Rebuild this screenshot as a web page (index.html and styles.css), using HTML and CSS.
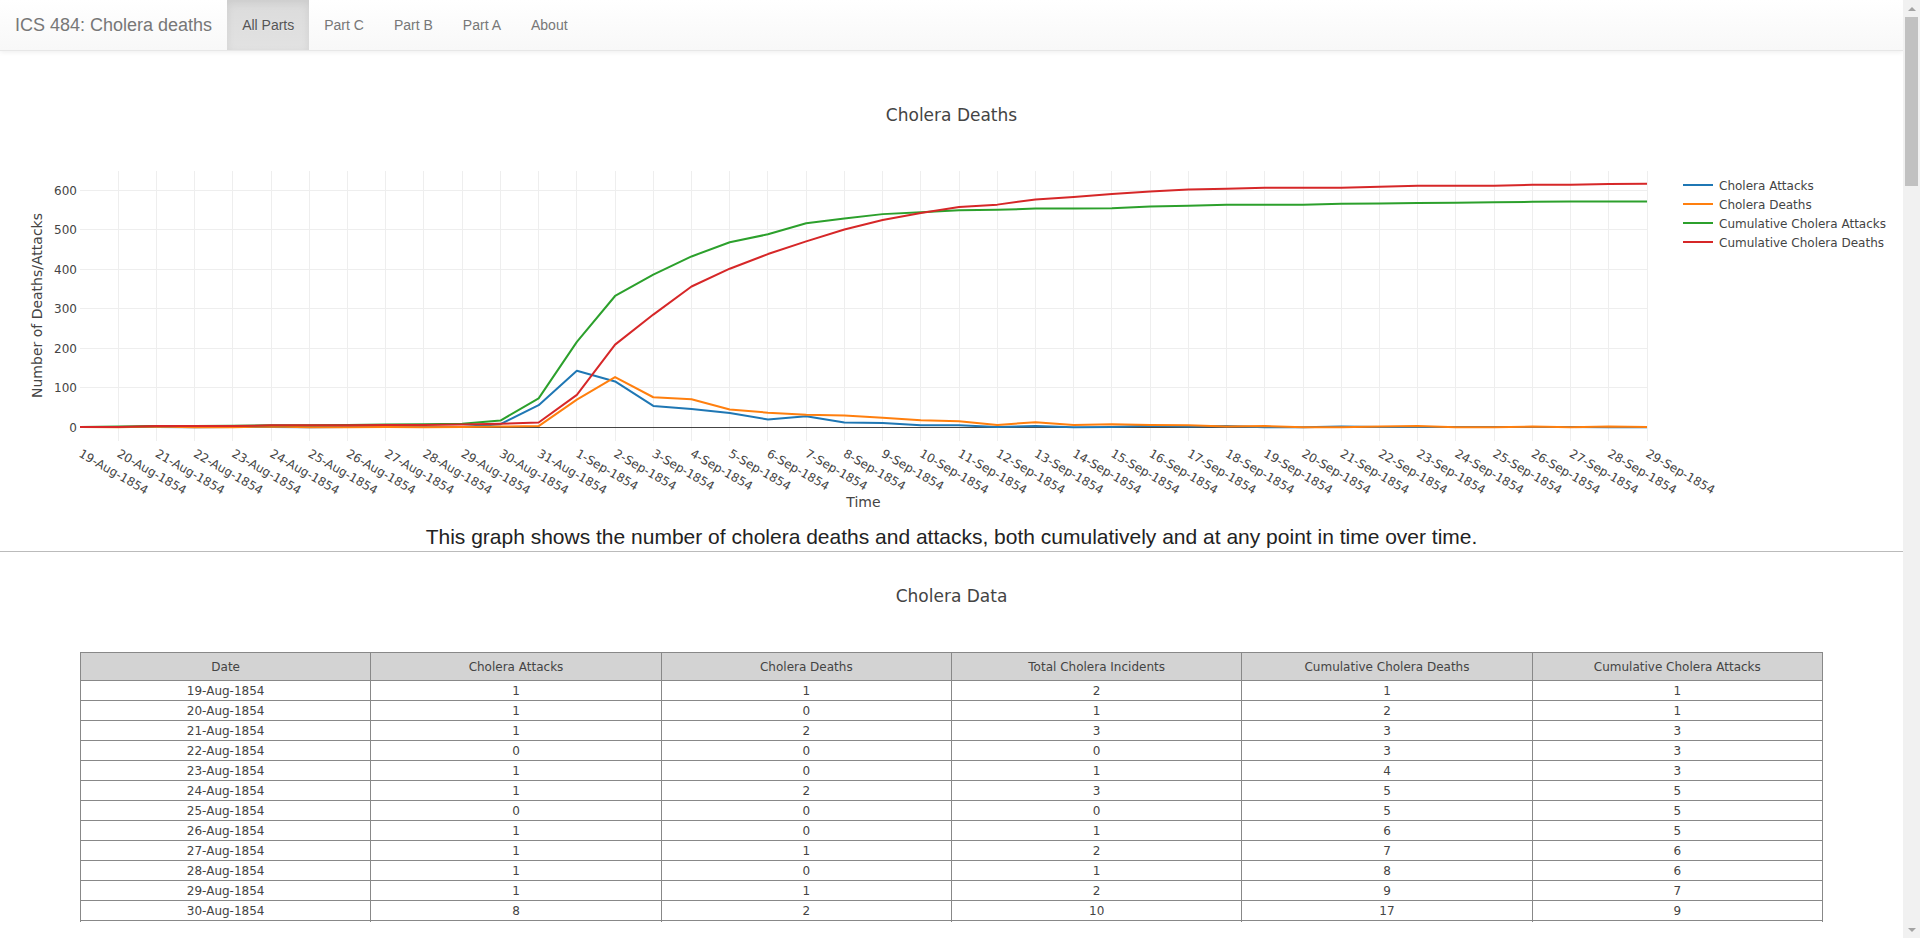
FILE: index.html
```html
<!DOCTYPE html>
<html lang="en">
<head>
<meta charset="utf-8">
<title>ICS 484: Cholera deaths</title>
<link rel="stylesheet" href="styles.css">
</head>
<body>
<div class="page">
  <nav class="navbar">
    <a class="brand" href="#">ICS 484: Cholera deaths</a>
    <ul class="nav">
      <li class="active"><a href="#">All Parts</a></li>
      <li><a href="#">Part C</a></li>
      <li><a href="#">Part B</a></li>
      <li><a href="#">Part A</a></li>
      <li><a href="#">About</a></li>
    </ul>
  </nav>

  <div class="figure">
    <svg class="chart" width="1903" height="450" viewBox="0 71 1903 450" xmlns="http://www.w3.org/2000/svg">
      <g class="grid">
        <g transform="translate(80 0) scale(38.22 1)">
          <path vector-effect="non-scaling-stroke" d="M1 171V441M2 171V441M3 171V441M4 171V441M5 171V441M6 171V441M7 171V441M8 171V441M9 171V441M10 171V441M11 171V441M12 171V441M13 171V441M14 171V441M15 171V441M16 171V441M17 171V441M18 171V441M19 171V441M20 171V441M21 171V441M22 171V441M23 171V441M24 171V441M25 171V441M26 171V441M27 171V441M28 171V441M29 171V441M30 171V441M31 171V441M32 171V441M33 171V441M34 171V441M35 171V441M36 171V441M37 171V441M38 171V441M39 171V441M40 171V441M41 171V441"/>
        </g>
        <path d="M80 387.5H1647M80 348H1647M80 308.5H1647M80 269H1647M80 229.5H1647M80 190H1647"/>
      </g>
      <path class="zero" d="M80 427.5H1647"/>

      <g class="traces" transform="translate(80 427.3) scale(38.22 -0.3955)">
        <polyline class="t-blue" vector-effect="non-scaling-stroke" points="0,1 1,1 2,1 3,0 4,1 5,1 6,0 7,1 8,1 9,1 10,1 11,8 12,56 13,143 14,116 15,54 16,46 17,36 18,20 19,28 20,12 21,11 22,5 23,5 24,1 25,3 26,0 27,1 28,4 29,2 30,3 31,0 32,0 33,2 34,1 35,1 36,1 37,1 38,1 39,1 40,0 41,0"/>
        <polyline class="t-orange" vector-effect="non-scaling-stroke" points="0,1 1,0 2,2 3,0 4,0 5,2 6,0 7,0 8,1 9,0 10,1 11,2 12,3 13,70 14,127 15,76 16,71 17,45 18,37 19,32 20,30 21,24 22,18 23,15 24,6 25,13 26,6 27,8 28,6 29,5 30,2 31,3 32,0 33,0 34,2 35,3 36,0 37,0 38,2 39,0 40,2 41,1"/>
        <polyline class="t-green" vector-effect="non-scaling-stroke" points="0,1 1,2 2,3 3,3 4,4 5,5 6,5 7,6 8,7 9,8 10,9 11,17 12,73 13,216 14,332 15,386 16,432 17,468 18,488 19,516 20,528 21,539 22,544 23,549 24,550 25,553 26,553 27,554 28,558 29,560 30,563 31,563 32,563 33,565 34,566 35,567 36,568 37,569 38,570 39,571 40,571 41,571"/>
        <polyline class="t-red" vector-effect="non-scaling-stroke" points="0,1 1,1 2,3 3,3 4,3 5,5 6,5 7,5 8,6 9,6 10,7 11,9 12,12 13,82 14,209 15,285 16,356 17,401 18,438 19,470 20,500 21,524 22,542 23,557 24,563 25,576 26,582 27,590 28,596 29,601 30,603 31,606 32,606 33,606 34,608 35,611 36,611 37,611 38,613 39,613 40,615 41,616"/>
      </g>

      <g class="ytick">
        <text x="77" y="431.5">0</text>
        <text x="77" y="392">100</text>
        <text x="77" y="352.5">200</text>
        <text x="77" y="313">300</text>
        <text x="77" y="273.5">400</text>
        <text x="77" y="234">500</text>
        <text x="77" y="194.5">600</text>
      </g>

      <g class="xtick">
        <text x="78" y="456" transform="rotate(30 78 456)">19-Aug-1854</text>
        <text x="116.2" y="456" transform="rotate(30 116.2 456)">20-Aug-1854</text>
        <text x="154.4" y="456" transform="rotate(30 154.4 456)">21-Aug-1854</text>
        <text x="192.7" y="456" transform="rotate(30 192.7 456)">22-Aug-1854</text>
        <text x="230.9" y="456" transform="rotate(30 230.9 456)">23-Aug-1854</text>
        <text x="269.1" y="456" transform="rotate(30 269.1 456)">24-Aug-1854</text>
        <text x="307.3" y="456" transform="rotate(30 307.3 456)">25-Aug-1854</text>
        <text x="345.5" y="456" transform="rotate(30 345.5 456)">26-Aug-1854</text>
        <text x="383.8" y="456" transform="rotate(30 383.8 456)">27-Aug-1854</text>
        <text x="422" y="456" transform="rotate(30 422 456)">28-Aug-1854</text>
        <text x="460.2" y="456" transform="rotate(30 460.2 456)">29-Aug-1854</text>
        <text x="498.4" y="456" transform="rotate(30 498.4 456)">30-Aug-1854</text>
        <text x="536.6" y="456" transform="rotate(30 536.6 456)">31-Aug-1854</text>
        <text x="574.9" y="456" transform="rotate(30 574.9 456)">1-Sep-1854</text>
        <text x="613.1" y="456" transform="rotate(30 613.1 456)">2-Sep-1854</text>
        <text x="651.3" y="456" transform="rotate(30 651.3 456)">3-Sep-1854</text>
        <text x="689.5" y="456" transform="rotate(30 689.5 456)">4-Sep-1854</text>
        <text x="727.7" y="456" transform="rotate(30 727.7 456)">5-Sep-1854</text>
        <text x="766" y="456" transform="rotate(30 766 456)">6-Sep-1854</text>
        <text x="804.2" y="456" transform="rotate(30 804.2 456)">7-Sep-1854</text>
        <text x="842.4" y="456" transform="rotate(30 842.4 456)">8-Sep-1854</text>
        <text x="880.6" y="456" transform="rotate(30 880.6 456)">9-Sep-1854</text>
        <text x="918.8" y="456" transform="rotate(30 918.8 456)">10-Sep-1854</text>
        <text x="957.1" y="456" transform="rotate(30 957.1 456)">11-Sep-1854</text>
        <text x="995.3" y="456" transform="rotate(30 995.3 456)">12-Sep-1854</text>
        <text x="1033.5" y="456" transform="rotate(30 1033.5 456)">13-Sep-1854</text>
        <text x="1071.7" y="456" transform="rotate(30 1071.7 456)">14-Sep-1854</text>
        <text x="1109.9" y="456" transform="rotate(30 1109.9 456)">15-Sep-1854</text>
        <text x="1148.2" y="456" transform="rotate(30 1148.2 456)">16-Sep-1854</text>
        <text x="1186.4" y="456" transform="rotate(30 1186.4 456)">17-Sep-1854</text>
        <text x="1224.6" y="456" transform="rotate(30 1224.6 456)">18-Sep-1854</text>
        <text x="1262.8" y="456" transform="rotate(30 1262.8 456)">19-Sep-1854</text>
        <text x="1301" y="456" transform="rotate(30 1301 456)">20-Sep-1854</text>
        <text x="1339.3" y="456" transform="rotate(30 1339.3 456)">21-Sep-1854</text>
        <text x="1377.5" y="456" transform="rotate(30 1377.5 456)">22-Sep-1854</text>
        <text x="1415.7" y="456" transform="rotate(30 1415.7 456)">23-Sep-1854</text>
        <text x="1453.9" y="456" transform="rotate(30 1453.9 456)">24-Sep-1854</text>
        <text x="1492.1" y="456" transform="rotate(30 1492.1 456)">25-Sep-1854</text>
        <text x="1530.4" y="456" transform="rotate(30 1530.4 456)">26-Sep-1854</text>
        <text x="1568.6" y="456" transform="rotate(30 1568.6 456)">27-Sep-1854</text>
        <text x="1606.8" y="456" transform="rotate(30 1606.8 456)">28-Sep-1854</text>
        <text x="1645" y="456" transform="rotate(30 1645 456)">29-Sep-1854</text>
      </g>

      <text class="ctitle" x="951.5" y="121">Cholera Deaths</text>
      <text class="atitle" x="863.5" y="507">Time</text>
      <text class="atitle" transform="translate(42 305.5) rotate(-90)">Number of Deaths/Attacks</text>

      <g class="legend">
        <path class="t-blue" d="M1683 185H1713"/>
        <path class="t-orange" d="M1683 204H1713"/>
        <path class="t-green" d="M1683 223H1713"/>
        <path class="t-red" d="M1683 242H1713"/>
        <text x="1719" y="189.5">Cholera Attacks</text>
        <text x="1719" y="208.5">Cholera Deaths</text>
        <text x="1719" y="227.5">Cumulative Cholera Attacks</text>
        <text x="1719" y="246.5">Cumulative Cholera Deaths</text>
      </g>
    </svg>
  </div>

  <p class="caption">This graph shows the number of cholera deaths and attacks, both cumulatively and at any point in time over time.</p>
  <div class="divider"></div>

  <div class="table-fig">
    <div class="table-title">Cholera Data</div>
    <div class="table-wrap">
      <table class="data">
        <thead>
          <tr><th>Date</th><th>Cholera Attacks</th><th>Cholera Deaths</th><th>Total Cholera Incidents</th><th>Cumulative Cholera Deaths</th><th>Cumulative Cholera Attacks</th></tr>
        </thead>
        <tbody>
          <tr><td>19-Aug-1854</td><td>1</td><td>1</td><td>2</td><td>1</td><td>1</td></tr>
          <tr><td>20-Aug-1854</td><td>1</td><td>0</td><td>1</td><td>2</td><td>1</td></tr>
          <tr><td>21-Aug-1854</td><td>1</td><td>2</td><td>3</td><td>3</td><td>3</td></tr>
          <tr><td>22-Aug-1854</td><td>0</td><td>0</td><td>0</td><td>3</td><td>3</td></tr>
          <tr><td>23-Aug-1854</td><td>1</td><td>0</td><td>1</td><td>4</td><td>3</td></tr>
          <tr><td>24-Aug-1854</td><td>1</td><td>2</td><td>3</td><td>5</td><td>5</td></tr>
          <tr><td>25-Aug-1854</td><td>0</td><td>0</td><td>0</td><td>5</td><td>5</td></tr>
          <tr><td>26-Aug-1854</td><td>1</td><td>0</td><td>1</td><td>6</td><td>5</td></tr>
          <tr><td>27-Aug-1854</td><td>1</td><td>1</td><td>2</td><td>7</td><td>6</td></tr>
          <tr><td>28-Aug-1854</td><td>1</td><td>0</td><td>1</td><td>8</td><td>6</td></tr>
          <tr><td>29-Aug-1854</td><td>1</td><td>1</td><td>2</td><td>9</td><td>7</td></tr>
          <tr><td>30-Aug-1854</td><td>8</td><td>2</td><td>10</td><td>17</td><td>9</td></tr>
          <tr class="stub"><td></td><td></td><td></td><td></td><td></td><td></td></tr>
        </tbody>
      </table>
    </div>
  </div>
</div>
<div class="scrollbar" aria-hidden="true">
  <div class="sb-btn"><span class="sb-up"></span></div>
  <div class="sb-thumb"></div>
  <div class="sb-fill"></div>
  <div class="sb-btn"><span class="sb-down"></span></div>
</div>
</body>
</html>
```

FILE: styles.css
```css
* { box-sizing: border-box; }

body {
  margin: 0;
  display: flex;
  align-items: flex-start;
  font-family: "Liberation Sans", Arial, Helvetica, sans-serif;
  font-size: 14px;
  color: #333;
  background: #fff;
}

.page {
  flex: none;
  width: 1903px;
  min-height: 5000px;
}

/* fake window scrollbar */
.scrollbar {
  position: sticky;
  top: 0;
  flex: none;
  width: 17px;
  height: 100vh;
  display: flex;
  flex-direction: column;
  background: #f1f1f1;
}
.sb-btn {
  height: 17px;
  display: flex;
  align-items: center;
  justify-content: center;
}
.sb-up {
  width: 0; height: 0;
  border-left: 4px solid transparent;
  border-right: 4px solid transparent;
  border-bottom: 4px solid #a3a3a3;
}
.sb-down {
  width: 0; height: 0;
  border-left: 4px solid transparent;
  border-right: 4px solid transparent;
  border-top: 4px solid #a3a3a3;
}
.sb-thumb {
  height: 169px;
  margin: 0 2px;
  background: #c1c1c1;
}
.sb-fill { flex: 1; }

/* navbar */
.navbar {
  display: flex;
  height: 51px;
  margin-bottom: 20px;
  background-image: linear-gradient(to bottom, #ffffff 0, #f8f8f8 100%);
  border-bottom: 1px solid #e7e7e7;
  box-shadow: inset 0 1px 0 rgba(255,255,255,.15), 0 1px 5px rgba(0,0,0,.075);
}
.brand {
  display: block;
  height: 50px;
  padding: 15px;
  font-size: 18px;
  line-height: 20px;
  color: #777;
  text-decoration: none;
  text-shadow: 0 1px 0 rgba(255,255,255,.25);
}
.nav {
  display: flex;
  margin: 0;
  padding: 0;
  list-style: none;
}
.nav a {
  display: block;
  height: 50px;
  padding: 15px;
  line-height: 20px;
  color: #777;
  text-decoration: none;
  text-shadow: 0 1px 0 rgba(255,255,255,.25);
}
.nav .active a {
  color: #555;
  background-image: linear-gradient(to bottom, #dbdbdb 0, #e2e2e2 100%);
  box-shadow: inset 0 3px 9px rgba(0,0,0,.075);
}

/* chart */
.figure { height: 450px; }
.chart { display: block; }
.chart text {
  font-family: "DejaVu Sans", Verdana, sans-serif;
  fill: #444;
}
.grid path { stroke: #eee; stroke-width: 1; fill: none; shape-rendering: crispEdges; }
.zero { stroke: #444; stroke-width: 1; fill: none; shape-rendering: crispEdges; }
.traces polyline { fill: none; stroke-width: 2; stroke-linejoin: round; }
.legend path { stroke-width: 2; fill: none; }
.t-blue { stroke: #1f77b4; }
.t-orange { stroke: #ff7f0e; }
.t-green { stroke: #2ca02c; }
.t-red { stroke: #d62728; }
.ytick text { font-size: 12px; text-anchor: end; }
.xtick text { font-size: 12px; text-anchor: start; }
.legend text { font-size: 12px; }
.ctitle { font-size: 17px; text-anchor: middle; }
.atitle { font-size: 14px; text-anchor: middle; }

/* caption */
.caption {
  margin: 4px 0 0;
  font-size: 21px;
  line-height: 24px;
  text-align: center;
  color: #222;
}
.divider {
  height: 0;
  margin-top: 2px;
  border-top: 1px solid #bbb;
}

/* table figure */
.table-fig { height: 450px; }
.table-title {
  height: 100px;
  padding-top: 34px;
  font-family: "DejaVu Sans", Verdana, sans-serif;
  font-size: 17px;
  line-height: 20px;
  text-align: center;
  color: #444;
}
.table-wrap {
  margin: 0 80px;
  height: 270px;
  overflow: hidden;
}
.data {
  width: 100%;
  border-collapse: collapse;
  table-layout: fixed;
  font-family: "DejaVu Sans", Verdana, sans-serif;
  font-size: 12px;
  color: #444;
}
.data th, .data td {
  border: 1px solid #888;
  padding: 0;
  text-align: center;
  font-weight: normal;
}
.data th {
  height: 28px;
  background: #d3d3d3;
}
.data td {
  height: 20px;
  line-height: 18px;
}
.data .stub td {
  height: 6px;
  border-bottom: 0;
}
```
